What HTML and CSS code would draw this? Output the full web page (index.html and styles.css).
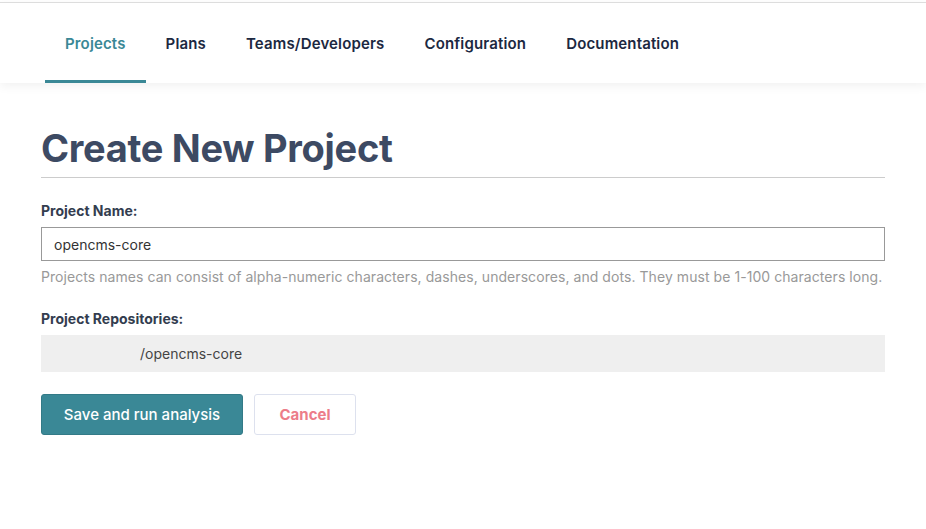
FILE: index.html
```html
<!DOCTYPE html>
<html lang="en">
<head>
    <meta charset="UTF-8">
    <meta name="viewport" content="width=device-width, initial-scale=1.0">
    <title>Create New Project</title>
    <link rel="stylesheet" href="styles.css">
</head>
<body>

    <!-- top navigation -->
    <div class="topbar">
        <nav class="tabs">
            <a href="#" class="active">Projects</a>
            <a href="#">Plans</a>
            <a href="#">Teams/Developers</a>
            <a href="#">Configuration</a>
            <a href="#">Documentation</a>
        </nav>
    </div>

    <!-- form -->
    <div class="content">
        <h1>Create New Project</h1>

        <label class="field-label" for="project-name">Project Name:</label>
        <input type="text" id="project-name" class="text-input" value="opencms-core">
        <div class="help">Projects names can consist of alpha-numeric characters, dashes, underscores, and dots. They must be 1-100 characters long.</div>

        <div class="field-label repos-label">Project Repositories:</div>
        <div class="repo-box"><span class="repo-name">/opencms-core</span></div>

        <div class="actions">
            <button class="btn btn-primary">Save and run analysis</button>
            <button class="btn btn-cancel">Cancel</button>
        </div>
    </div>

</body>
</html>
```

FILE: styles.css
```css
body {
    margin: 0;
    padding: 0;
    font-family: Inter, "Noto Sans", sans-serif;
    background-color: #fff;
    color: #333d4f;
}

/* top navigation */
.topbar {
    border-top: 1px solid #ddd;
    margin-top: 2px;
    height: 80px;
    box-shadow: 0 3px 10px rgba(0, 0, 0, 0.06);
}

.tabs {
    display: flex;
    height: 80px;
    padding-left: 45px;
}

.tabs a {
    display: flex;
    align-items: center;
    box-sizing: border-box;
    padding: 4px 20px 0;
    height: 80px;
    font-size: 15px;
    font-weight: 600;
    letter-spacing: 0.15px;
    color: #1c2841;
    text-decoration: none;
    border-bottom: 3px solid transparent;
}

.tabs a.active {
    color: #3a8896;
    border-bottom-color: #3a8896;
}

/* form area */
.content {
    margin: 0 41px;
    padding-top: 40px;
}

h1 {
    margin: 0;
    font-size: 38px;
    font-weight: 700;
    color: #3d4a63;
    line-height: 50px;
    padding-bottom: 4px;
    border-bottom: 1px solid #ccc;
    letter-spacing: -0.3px;
}

.field-label {
    display: block;
    margin-top: 24px;
    font-size: 14px;
    font-weight: 700;
    color: #333d4f;
    line-height: 18px;
}

.text-input {
    display: block;
    box-sizing: border-box;
    width: 100%;
    height: 34px;
    margin-top: 7px;
    padding: 0 12px;
    border: 1px solid #999;
    font-family: inherit;
    font-size: 14px;
    color: #333;
    outline: none;
}

.help {
    margin-top: 7px;
    font-size: 14px;
    color: #999;
    line-height: 18px;
    letter-spacing: 0.06px;
}

.repos-label {
    margin-top: 24px;
}

.repo-box {
    margin-top: 7px;
    height: 37px;
    background-color: #efefef;
    display: flex;
    align-items: center;
    padding-left: 99px;
    font-size: 14px;
    color: #444;
}

/* buttons */
.actions {
    display: flex;
    gap: 11px;
    margin-top: 22px;
}

.btn {
    height: 41px;
    border-radius: 3px;
    font-family: inherit;
    font-size: 15px;
    cursor: pointer;
}

.btn-primary {
    width: 202px;
    background-color: #3a8896;
    color: #fff;
    border: 1px solid #337a87;
    font-weight: 500;
}

.btn-cancel {
    width: 102px;
    background-color: #fff;
    color: #ec7d89;
    border: 1px solid #dde1ee;
    font-weight: 700;
}
```
